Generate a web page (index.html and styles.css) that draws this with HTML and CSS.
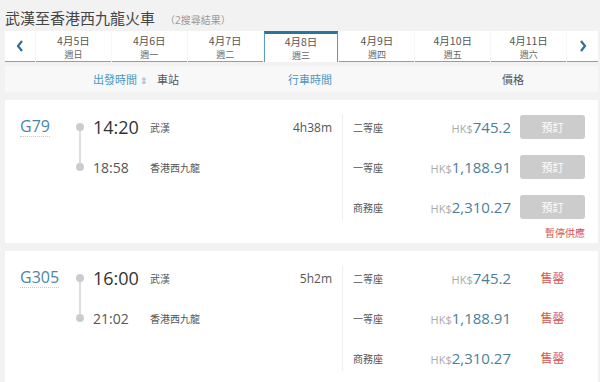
FILE: index.html
```html
<!DOCTYPE html>
<html lang="zh-Hant">
<head>
    <meta charset="UTF-8">
    <meta name="viewport" content="width=device-width, initial-scale=1.0">
    <title>武漢至香港西九龍火車</title>
    <link rel="stylesheet" href="styles.css">
</head>
<body>
    <div class="page-title">
        <h1>武漢至香港西九龍火車</h1>
        <span class="result-count">（2搜尋結果）</span>
    </div>

    <div class="date-tabs">
        <button class="tab-arrow" aria-label="前一週">
            <svg width="10" height="14" viewBox="0 0 10 14"><polyline points="7,2 3,7 7,12" fill="none" stroke="#2f6f97" stroke-width="2.2"/></svg>
        </button>
        <div class="date-tab"><span class="date">4月5日</span><span class="weekday">週日</span></div>
        <div class="date-tab"><span class="date">4月6日</span><span class="weekday">週一</span></div>
        <div class="date-tab"><span class="date">4月7日</span><span class="weekday">週二</span></div>
        <div class="date-tab active"><span class="date">4月8日</span><span class="weekday">週三</span></div>
        <div class="date-tab"><span class="date">4月9日</span><span class="weekday">週四</span></div>
        <div class="date-tab"><span class="date">4月10日</span><span class="weekday">週五</span></div>
        <div class="date-tab"><span class="date">4月11日</span><span class="weekday">週六</span></div>
        <button class="tab-arrow" aria-label="下一週">
            <svg width="10" height="14" viewBox="0 0 10 14"><polyline points="3,2 7,7 3,12" fill="none" stroke="#2f6f97" stroke-width="2.2"/></svg>
        </button>
    </div>

    <div class="list-header">
        <span class="col-depart sortable">出發時間 <span class="sort-icon">⇕</span></span>
        <span class="col-station">車站</span>
        <span class="col-duration sortable">行車時間</span>
        <span class="col-price">價格</span>
    </div>

    <div class="train-card">
        <div class="train-main">
            <div class="train-info">
                <a class="train-no">G79</a>
                <div class="timeline"><i class="dot"></i><i class="line"></i><i class="dot"></i></div>
                <span class="time depart">14:20</span>
                <span class="station">武漢</span>
                <span class="duration">4h38m</span>
                <span class="time arrive">18:58</span>
                <span class="station">香港西九龍</span>
            </div>
            <div class="divider"></div>
            <div class="seats">
                <div class="seat-row">
                    <span class="seat-class">二等座</span>
                    <span class="price"><small>HK$</small>745.2</span>
                    <span class="action"><button class="book-btn" disabled>預訂</button></span>
                </div>
                <div class="seat-row">
                    <span class="seat-class">一等座</span>
                    <span class="price"><small>HK$</small>1,188.91</span>
                    <span class="action"><button class="book-btn" disabled>預訂</button></span>
                </div>
                <div class="seat-row">
                    <span class="seat-class">商務座</span>
                    <span class="price"><small>HK$</small>2,310.27</span>
                    <span class="action"><button class="book-btn" disabled>預訂</button></span>
                </div>
            </div>
        </div>
        <div class="train-note">暫停供應</div>
    </div>

    <div class="train-card">
        <div class="train-main">
            <div class="train-info">
                <a class="train-no">G305</a>
                <div class="timeline"><i class="dot"></i><i class="line"></i><i class="dot"></i></div>
                <span class="time depart">16:00</span>
                <span class="station">武漢</span>
                <span class="duration">5h2m</span>
                <span class="time arrive">21:02</span>
                <span class="station">香港西九龍</span>
            </div>
            <div class="divider"></div>
            <div class="seats">
                <div class="seat-row">
                    <span class="seat-class">二等座</span>
                    <span class="price"><small>HK$</small>745.2</span>
                    <span class="action sold-out">售罄</span>
                </div>
                <div class="seat-row">
                    <span class="seat-class">一等座</span>
                    <span class="price"><small>HK$</small>1,188.91</span>
                    <span class="action sold-out">售罄</span>
                </div>
                <div class="seat-row">
                    <span class="seat-class">商務座</span>
                    <span class="price"><small>HK$</small>2,310.27</span>
                    <span class="action sold-out">售罄</span>
                </div>
            </div>
        </div>
    </div>
</body>
</html>
```

FILE: styles.css
```css
body {
    margin: 0;
    padding: 0 2px 0 5px;
    background: #f2f2f2;
    font-family: "Open Sans", "Noto Sans CJK TC", sans-serif;
    color: #555;
    overflow: hidden;
}
.page-title {
    display: flex;
    align-items: baseline;
    height: 31px;
    padding-top: 7px;
    box-sizing: border-box;
}
.page-title h1 {
    margin: 0;
    font-size: 15px;
    font-weight: normal;
    color: #444;
}
.result-count {
    margin-left: 10px;
    font-size: 10px;
    color: #999;
}
.date-tabs {
    display: flex;
    height: 31px;
    background: #f7f7f7;
}
.tab-arrow {
    width: 30px;
    padding: 0;
    border: none;
    border-bottom: 1px solid #6fa9c6;
    background: #fff;
    display: flex;
    align-items: center;
    justify-content: center;
}
.tab-arrow:last-child {
    width: 31px;
}
.date-tab {
    width: 75px;
    margin-left: 1px;
    display: flex;
    flex-direction: column;
    align-items: center;
    justify-content: center;
    background: #fff;
    border-bottom: 1px solid #6fa9c6;
    padding-top: 2px;
    box-sizing: border-box;
    font-family: "Noto Sans CJK TC", sans-serif;
}
.date-tab + .tab-arrow {
    margin-left: 1px;
}
.date-tab .date {
    display: block;
    font-size: 10.5px;
    line-height: 15px;
    color: #555;
}
.date-tab .weekday {
    display: block;
    font-size: 9px;
    line-height: 13px;
    color: #666;
}
.date-tab.active {
    border: 1px solid #5d9cbd;
    border-top: 3px solid #2c7399;
    border-bottom: none;
    padding-top: 0;
}
.list-header {
    display: flex;
    align-items: center;
    height: 26px;
    margin-top: 4px;
    background: #f8f8f8;
    font-size: 11px;
    color: #555;
}
.col-depart {
    margin-left: 88px;
    width: 64px;
}
.col-station {
    width: 131px;
}
.col-duration {
    width: 214px;
}
.sortable {
    color: #4a97c2;
}
.sort-icon {
    font-size: 9px;
    color: #8ab;
}
.train-card {
    margin-top: 8px;
    background: #fff;
    padding: 7px 13px 4px 15px;
    min-height: 130px;
}
.train-main {
    display: flex;
}
.train-info {
    width: 312px;
    display: grid;
    grid-template-columns: 56px 8px 66px 1fr auto;
    grid-template-rows: 40px 40px;
    align-items: center;
}
.train-no {
    font-size: 16px;
    color: #4a85a8;
    justify-self: start;
    border-bottom: 1px dotted #b7cfdd;
    line-height: 19px;
}
.timeline {
    grid-column: 2;
    grid-row: 1 / span 2;
    align-self: stretch;
    display: flex;
    flex-direction: column;
    align-items: center;
    padding: 16px 0;
}
.timeline .dot {
    width: 8px;
    height: 8px;
    border-radius: 50%;
    background: #ccc;
}
.timeline .line {
    flex: 1;
    width: 2px;
    background: #ddd;
}
.time {
    padding-left: 9px;
    color: #333;
}
.time.depart {
    font-size: 18px;
}
.time.arrive {
    grid-column: 3;
    font-size: 14px;
    color: #555;
}
.station {
    font-size: 10px;
    color: #555;
}
.duration {
    font-size: 12px;
    color: #555;
}
.divider {
    width: 1px;
    background: #eee;
    margin: 7px 10px 7px 10px;
}
.seats {
    flex: 1;
}
.seat-row {
    display: flex;
    align-items: center;
    height: 40px;
}
.seat-class {
    width: 60px;
    font-size: 10px;
    color: #555;
}
.price {
    flex: 1;
    text-align: right;
    font-size: 15px;
    color: #4a7f9a;
}
.price small {
    font-size: 11px;
    color: #aaa;
}
.action {
    width: 65px;
    margin-left: 9px;
    text-align: center;
}
.book-btn {
    width: 65px;
    height: 24px;
    border: none;
    border-radius: 3px;
    background: #ccc;
    color: #fff;
    font-family: inherit;
    font-size: 11px;
}
.sold-out {
    font-size: 12px;
    color: #d9534f;
}
.train-note {
    text-align: right;
    font-size: 10px;
    color: #d9534f;
    line-height: 12px;
}
```
